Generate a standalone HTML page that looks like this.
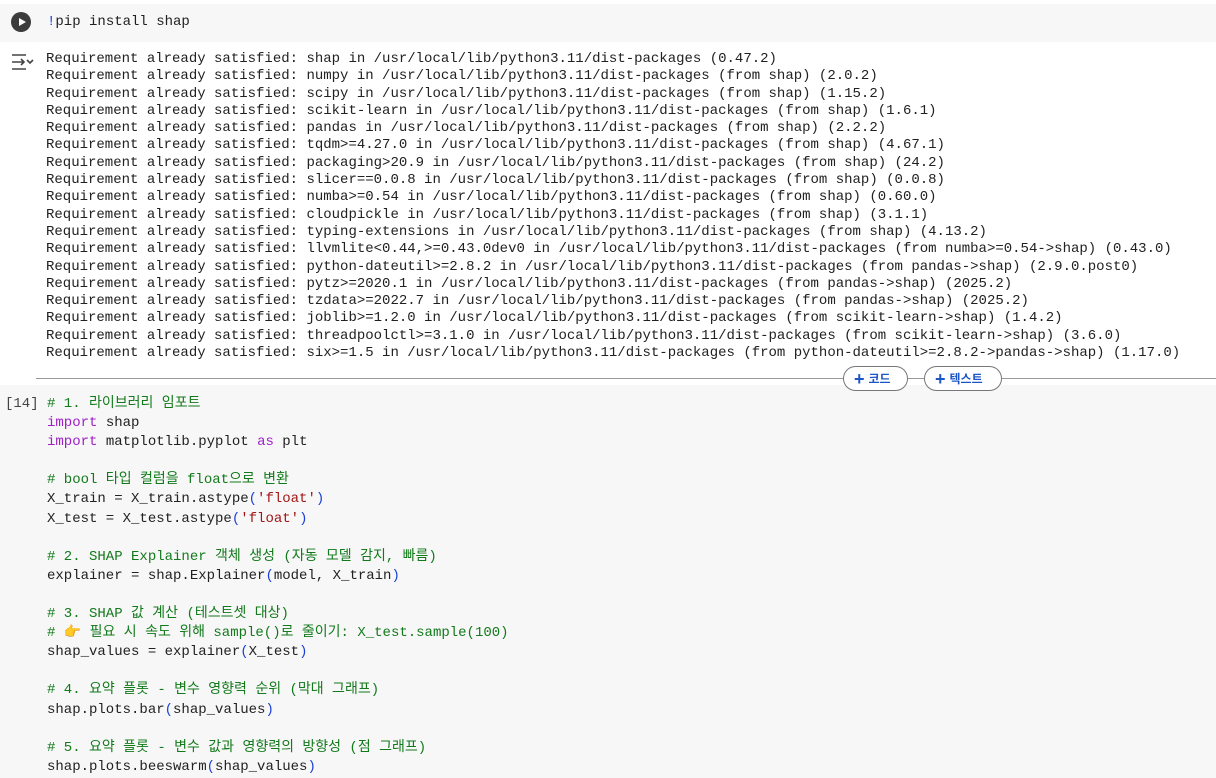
<!DOCTYPE html>
<html><head><meta charset="utf-8"><style>
body{margin:0;width:1216px;height:778px;background:#fff;overflow:hidden;position:relative;font-family:"Liberation Mono","Noto Sans CJK KR",monospace;font-size:14px;color:#212121}
.cell1{position:absolute;left:0;top:4px;width:1216px;height:38px;background:#f7f7f7}
.run{position:absolute;left:11px;top:12px;width:20px;height:20px;border-radius:50%;background:#3c3c3c}
.run:after{content:"";position:absolute;left:8px;top:5.5px;border-left:7px solid #fff;border-top:4.5px solid transparent;border-bottom:4.5px solid transparent}
pre{margin:0;font:inherit;position:absolute;line-height:17.3px;white-space:pre}
.out{left:46px;top:51px;color:#212121}
.cell2{position:absolute;left:0;top:385px;width:1216px;height:393px;background:#f7f7f7}
.hr{position:absolute;left:36px;top:378px;width:1180px;height:1px;background:#999}
.btn{position:absolute;top:366px;height:25px;border:1px solid #777;border-radius:14px;background:#fff;color:#1a56c7;font-family:"Liberation Sans","Noto Sans CJK KR",sans-serif;font-size:12px;font-weight:bold;line-height:25px;box-sizing:border-box;padding-left:10px}
.btn b{font-size:18px;font-weight:bold;vertical-align:-2px;margin-right:4px}
.c{color:#127a1b}.k{color:#a020c8}.s{color:#a31515}.p{color:#1a3fd6}
.code{position:absolute;left:47px;top:395px}
.code div{height:19.1px;line-height:19.1px;white-space:pre}
</style></head><body>
<div class="cell1"></div>
<div class="run"></div>
<pre style="left:47px;top:14px"><span class="p">!</span>pip install shap</pre>
<svg style="position:absolute;left:10px;top:53px" width="24" height="18" viewBox="0 0 24 18"><path d="M2 2h14M2 9h12M11 6l3 3-3 3M2 16h14M17 7l3 3 3-3" stroke="#444" stroke-width="1.6" fill="none"/></svg>
<pre class="out">Requirement already satisfied: shap in /usr/local/lib/python3.11/dist-packages (0.47.2)
Requirement already satisfied: numpy in /usr/local/lib/python3.11/dist-packages (from shap) (2.0.2)
Requirement already satisfied: scipy in /usr/local/lib/python3.11/dist-packages (from shap) (1.15.2)
Requirement already satisfied: scikit-learn in /usr/local/lib/python3.11/dist-packages (from shap) (1.6.1)
Requirement already satisfied: pandas in /usr/local/lib/python3.11/dist-packages (from shap) (2.2.2)
Requirement already satisfied: tqdm>=4.27.0 in /usr/local/lib/python3.11/dist-packages (from shap) (4.67.1)
Requirement already satisfied: packaging>20.9 in /usr/local/lib/python3.11/dist-packages (from shap) (24.2)
Requirement already satisfied: slicer==0.0.8 in /usr/local/lib/python3.11/dist-packages (from shap) (0.0.8)
Requirement already satisfied: numba>=0.54 in /usr/local/lib/python3.11/dist-packages (from shap) (0.60.0)
Requirement already satisfied: cloudpickle in /usr/local/lib/python3.11/dist-packages (from shap) (3.1.1)
Requirement already satisfied: typing-extensions in /usr/local/lib/python3.11/dist-packages (from shap) (4.13.2)
Requirement already satisfied: llvmlite&lt;0.44,&gt;=0.43.0dev0 in /usr/local/lib/python3.11/dist-packages (from numba&gt;=0.54-&gt;shap) (0.43.0)
Requirement already satisfied: python-dateutil&gt;=2.8.2 in /usr/local/lib/python3.11/dist-packages (from pandas-&gt;shap) (2.9.0.post0)
Requirement already satisfied: pytz&gt;=2020.1 in /usr/local/lib/python3.11/dist-packages (from pandas-&gt;shap) (2025.2)
Requirement already satisfied: tzdata&gt;=2022.7 in /usr/local/lib/python3.11/dist-packages (from pandas-&gt;shap) (2025.2)
Requirement already satisfied: joblib&gt;=1.2.0 in /usr/local/lib/python3.11/dist-packages (from scikit-learn-&gt;shap) (1.4.2)
Requirement already satisfied: threadpoolctl&gt;=3.1.0 in /usr/local/lib/python3.11/dist-packages (from scikit-learn-&gt;shap) (3.6.0)
Requirement already satisfied: six&gt;=1.5 in /usr/local/lib/python3.11/dist-packages (from python-dateutil&gt;=2.8.2-&gt;pandas-&gt;shap) (1.17.0)</pre>
<div class="cell2"></div>
<div class="hr"></div>
<div class="btn" style="left:843px;width:65px"><b>+</b>코드</div>
<div class="btn" style="left:924px;width:78px"><b>+</b>텍스트</div>
<div style="position:absolute;left:5px;top:395px;line-height:19.1px;color:#444">[14]</div>
<div class="code"><div><span class="c"># 1. 라이브러리 임포트</span></div><div><span class="k">import</span> shap</div><div><span class="k">import</span> matplotlib.pyplot <span class="k">as</span> plt</div><div></div><div><span class="c"># bool 타입 컬럼을 float으로 변환</span></div><div>X_train = X_train.astype<span class="p">(</span><span class="s">'float'</span><span class="p">)</span></div><div>X_test = X_test.astype<span class="p">(</span><span class="s">'float'</span><span class="p">)</span></div><div></div><div><span class="c"># 2. SHAP Explainer 객체 생성 (자동 모델 감지, 빠름)</span></div><div>explainer = shap.Explainer<span class="p">(</span>model, X_train<span class="p">)</span></div><div></div><div><span class="c"># 3. SHAP 값 계산 (테스트셋 대상)</span></div><div><span class="c"># 👉 필요 시 속도 위해 sample()로 줄이기: X_test.sample(100)</span></div><div>shap_values = explainer<span class="p">(</span>X_test<span class="p">)</span></div><div></div><div><span class="c"># 4. 요약 플롯 - 변수 영향력 순위 (막대 그래프)</span></div><div>shap.plots.bar<span class="p">(</span>shap_values<span class="p">)</span></div><div></div><div><span class="c"># 5. 요약 플롯 - 변수 값과 영향력의 방향성 (점 그래프)</span></div><div>shap.plots.beeswarm<span class="p">(</span>shap_values<span class="p">)</span></div></div>
</body></html>
